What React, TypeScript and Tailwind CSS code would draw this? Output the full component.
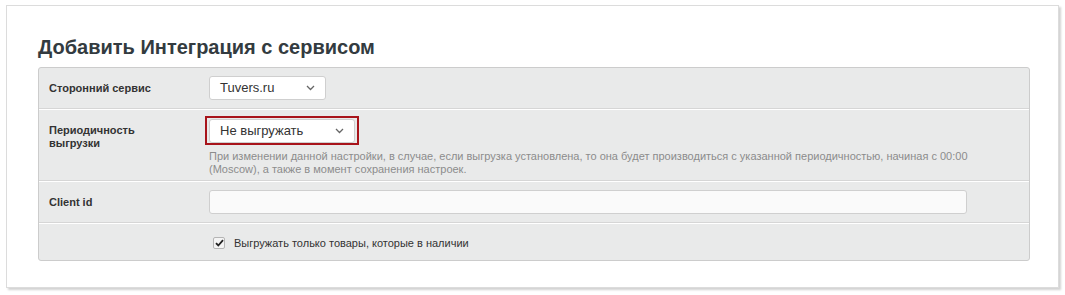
import React from "react";

const Chevron = () => (
  <svg width="9" height="6" viewBox="0 0 9 6" className="text-[#666]">
    <path d="M1 1l3.5 3.5L8 1" fill="none" stroke="currentColor" strokeWidth="1.3" />
  </svg>
);

const Select = ({ value, width }: { value: string; width: string }) => (
  <div
    className={`${width} h-[24px] flex items-center justify-between pl-[10px] pr-[10px] bg-white border border-[#cfcfcf] rounded-[3px] text-[13px] text-[#333]`}
  >
    <span>{value}</span>
    <Chevron />
  </div>
);

const App = () => {
  return (
    <div
      className="w-[1065px] h-[295px] bg-white pt-[5px] pl-[6px]"
      style={{ fontFamily: '"Liberation Sans", Arial, sans-serif' }}
    >
      <div className="w-[1053px] h-[283px] bg-white border border-[#dcdcdc] shadow-[2px_2px_2px_rgba(0,0,0,0.18)] px-[31px] pt-[29px]">
        <h2 className="text-[20px] font-bold text-[#333b40] leading-[24px] mb-[8px]">
          Добавить Интеграция с сервисом
        </h2>

        <div className="w-[992px] bg-[#e9eaea] border border-[#cccccc] rounded-[3px] text-[#333]">
          {/* row 1 */}
          <div className="flex items-center h-[41px] border-b border-[#d6d6d6]">
            <div className="w-[170px] pl-[10px] text-[11px] font-bold">Сторонний сервис</div>
            <Select value="Tuvers.ru" width="w-[117px]" />
          </div>

          {/* row 2 */}
          <div className="flex h-[72px] border-t border-white border-b border-b-[#d6d6d6] pt-[6px]">
            <div className="w-[170px] pl-[10px] pt-[8px] text-[11px] font-bold leading-[13px]">
              Периодичность
              <br />
              выгрузки
            </div>
            <div className="flex flex-col">
              <div className="-ml-[4px] w-[154px] h-[29px] border-2 border-[#a8141b] flex items-center pl-[2px]">
                <Select value="Не выгружать" width="w-[146px]" />
              </div>
              <p className="mt-[5px] text-[11px] leading-[13px] text-[#8c8c8c]">
                При изменении данной настройки, в случае, если выгрузка установлена, то она будет производиться с указанной периодичностью, начиная с 00:00
                <br />
                (Moscow), а также в момент сохранения настроек.
              </p>
            </div>
          </div>

          {/* row 3 */}
          <div className="flex items-center h-[42px] border-t border-white border-b border-b-[#d6d6d6]">
            <div className="w-[170px] pl-[10px] text-[11px] font-bold">Client id</div>
            <div className="w-[758px] h-[24px] bg-[#fafafa] border border-[#cfcfcf] rounded-[3px]" />
          </div>

          {/* row 4 */}
          <div className="flex items-center h-[37px] border-t border-white pt-[2px]">
            <div className="w-[174px]" />
            <div className="w-[12px] h-[12px] bg-[#f4f4f4] border border-[#b5b5b5] rounded-[2px] flex items-center justify-center">
              <svg width="9" height="8" viewBox="0 0 9 8">
                <path d="M1 4.2l2.3 2.3L8 1.2" fill="none" stroke="#222" strokeWidth="1.8" />
              </svg>
            </div>
            <span className="ml-[9px] text-[11px]">Выгружать только товары, которые в наличии</span>
          </div>
        </div>
      </div>
    </div>
  );
};

export default App;
